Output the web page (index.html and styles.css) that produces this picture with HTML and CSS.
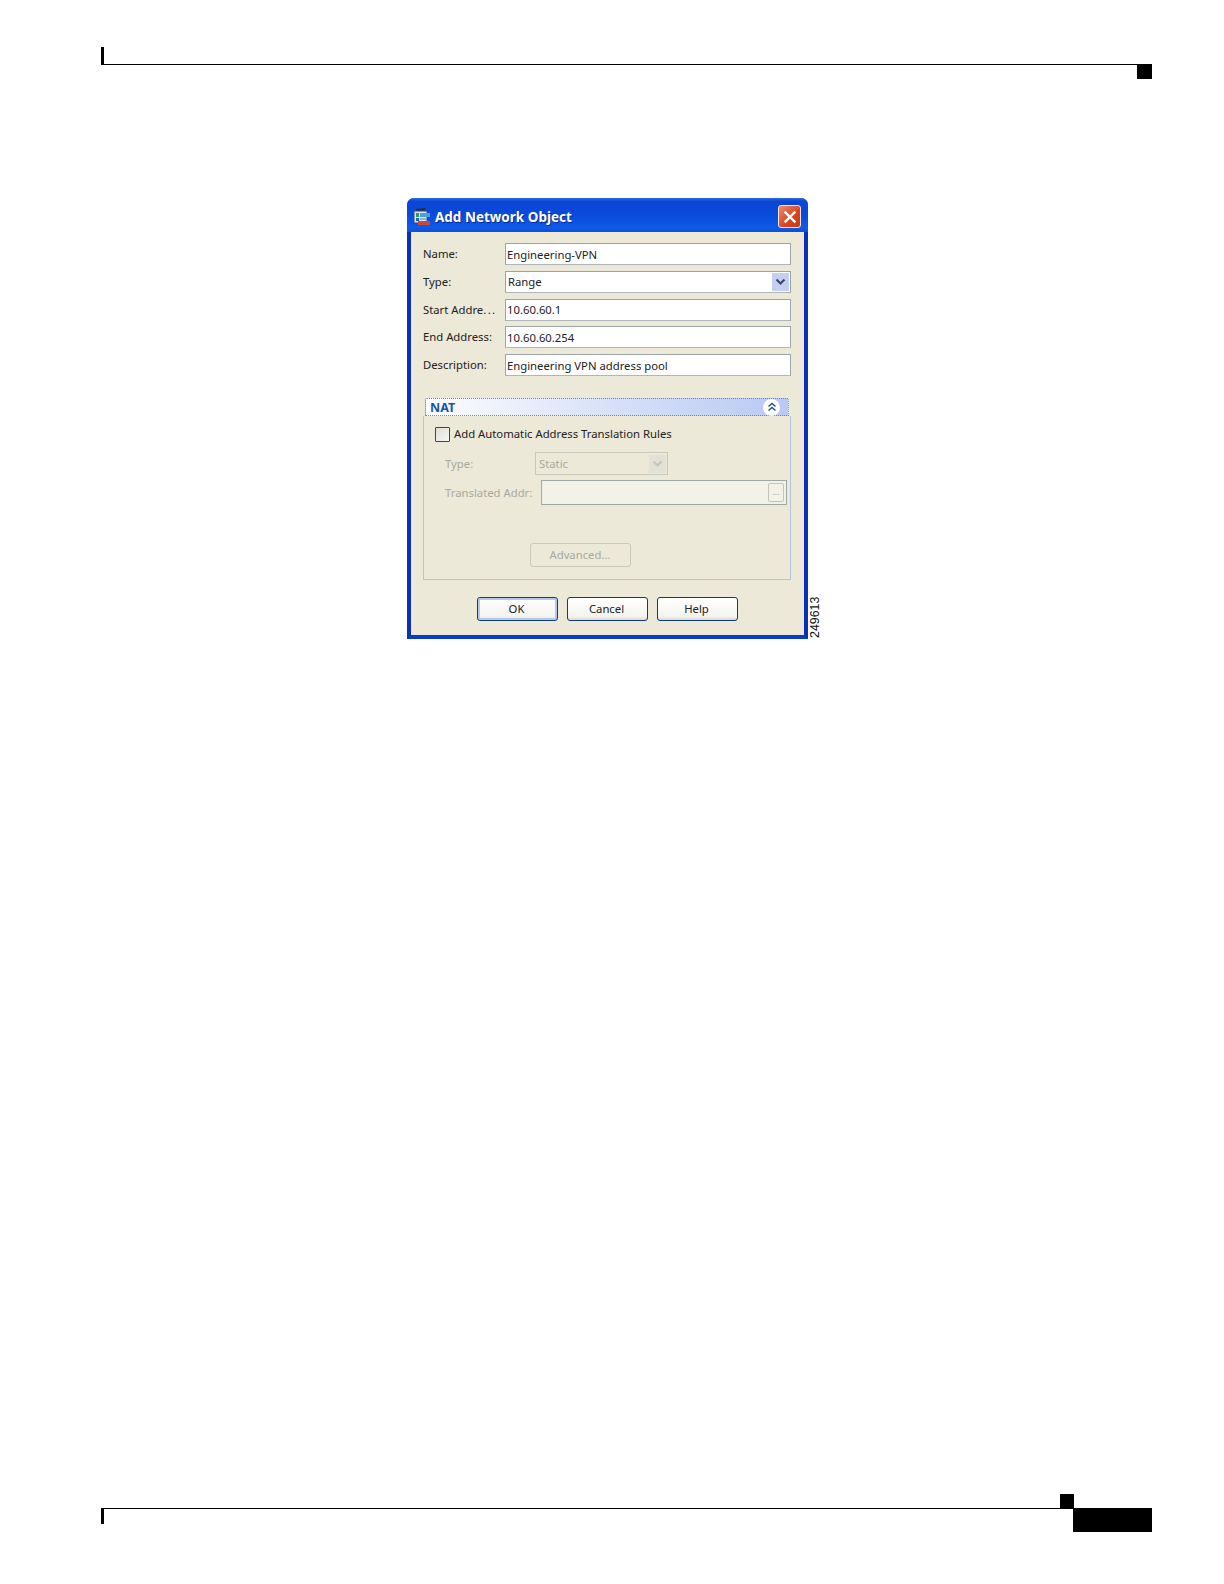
FILE: index.html
```html
<!DOCTYPE html>
<html lang="en">
<head>
  <meta charset="UTF-8" />
  <title>Add Network Object</title>
  <link rel="stylesheet" href="styles.css">
</head>
<body>

  <!-- Page header -->
  <div class="page-head">
    <div class="head-rule"></div>
    <div class="head-square"></div>
  </div>

  <!-- Figure: dialog plus rotated figure number -->
  <div class="figure">
    <div class="dialog">
      <div class="titlebar">
        <svg class="app-icon" width="18" height="18" viewBox="0 0 18 18">
          <path d="M3 1 L12 0 L13 4 L3 4 Z" fill="#1f2f4f"/>
          <rect x="1" y="3" width="13" height="12" fill="#dfe8f2" stroke="#2d4a78"/>
          <rect x="3" y="5" width="3" height="4" fill="#2f9a5b"/>
          <rect x="3" y="10" width="3" height="3" fill="#1d5fc4"/>
          <rect x="7" y="5" width="10" height="4" fill="#49a0e8"/>
          <rect x="7" y="10" width="6" height="2" fill="#8fb0d8"/>
          <rect x="5" y="13" width="12" height="4" fill="#c9473d"/>
        </svg>
        <span class="title">Add Network Object</span>
        <div class="close">
          <svg width="14" height="14" viewBox="0 0 14 14"><path d="M2.5 2.5 L11.5 11.5 M11.5 2.5 L2.5 11.5" stroke="#fff" stroke-width="2.4" stroke-linecap="square"/></svg>
        </div>
      </div>

      <div class="body">
        <div class="field-row">
          <label>Name:</label>
          <div class="input">Engineering-VPN</div>
        </div>
        <div class="field-row">
          <label>Type:</label>
          <div class="input select">
            <span>Range</span>
            <div class="arrow"><svg width="11" height="8" viewBox="0 0 11 8"><path d="M1.5 1.5 L5.5 5.5 L9.5 1.5" fill="none" stroke="#3c4a6b" stroke-width="2.2"/></svg></div>
          </div>
        </div>
        <div class="field-row">
          <label>Start Addre<span class="ell">...</span></label>
          <div class="input">10.60.60.1</div>
        </div>
        <div class="field-row">
          <label>End Address:</label>
          <div class="input">10.60.60.254</div>
        </div>
        <div class="field-row">
          <label>Description:</label>
          <div class="input">Engineering VPN address pool</div>
        </div>

        <div class="nat">
          <div class="nat-head">
            <span>NAT</span>
            <div class="collapse">
              <svg width="10" height="10" viewBox="0 0 10 10"><path d="M1.5 4.5 L5 1.5 L8.5 4.5 M1.5 8.5 L5 5.5 L8.5 8.5" fill="none" stroke="#24508f" stroke-width="1.5"/></svg>
            </div>
          </div>
          <div class="nat-body">
            <div class="check-row">
              <div class="checkbox"></div>
              <span>Add Automatic Address Translation Rules</span>
            </div>
            <div class="nat-type">
              <label>Type:</label>
              <div class="off-select">
                <span>Static</span>
                <div class="off-arrow"><svg width="11" height="8" viewBox="0 0 11 8"><path d="M1.5 1.5 L5.5 5.5 L9.5 1.5" fill="none" stroke="#c4c4bb" stroke-width="2"/></svg></div>
              </div>
            </div>
            <div class="nat-addr">
              <label>Translated Addr:</label>
              <div class="off-input"><div class="dots">...</div></div>
            </div>
            <button class="btn advanced">Advanced...</button>
          </div>
        </div>

        <div class="actions">
          <button class="btn primary">OK</button>
          <button class="btn">Cancel</button>
          <button class="btn">Help</button>
        </div>
      </div>
    </div>
    <div class="fig-num"><span>249613</span></div>
  </div>

  <!-- Page footer -->
  <div class="page-foot">
    <div class="foot-square"></div>
    <div class="foot-rule"></div>
    <div class="foot-box"></div>
  </div>

</body>
</html>
```

FILE: styles.css
```css
* {
  box-sizing: border-box;
}

body {
  margin: 0;
  width: 1224px;
  height: 1584px;
  background: white;
  font-family: "Noto Sans", sans-serif;
  font-size: 11.3px;
  color: #222;
  overflow: hidden;
  display: flex;
  flex-direction: column;
}

.page-head {
  margin: 47px 72px 0 101px;
  height: 32px;
  position: relative;
}

.head-rule {
  height: 18px;
  border-left: 3px solid black;
  border-bottom: 1px solid black;
}

.head-square {
  position: absolute;
  right: 0;
  top: 17px;
  width: 15px;
  height: 15px;
  background: black;
}

.figure {
  margin: 119px 0 0 407px;
  display: flex;
  align-items: flex-end;
}

.dialog {
  width: 401px;
  height: 441px;
  display: flex;
  flex-direction: column;
  border-style: solid;
  border-width: 0 4px 4px;
  border-color: #0f50dc #0a30b8 #0a3cc8;
  border-radius: 7px 7px 0 0;
}

.titlebar {
  height: 34px;
  flex: none;
  display: flex;
  align-items: center;
  margin: 0 -4px;
  padding: 3px 7px 0 6px;
  color: white;
  background: linear-gradient(#2a6ae0, #0a45d5 10%, #0a4ada 50%, #0f5ae8 88%, #0a50d8);
  border-radius: 7px 7px 0 0;
}

.app-icon {
  flex: none;
}

.title {
  margin-left: 4px;
  flex: 1;
  font-size: 13.5px;
  font-weight: bold;
  text-shadow: 1px 1px 0 #0a2a90;
}

.close {
  width: 23px;
  height: 23px;
  border: 1px solid #f0e8e0;
  border-radius: 3px;
  background: linear-gradient(135deg, #ec8a70, #d9431f 60%, #c63a18);
  display: flex;
  align-items: center;
  justify-content: center;
}

.body {
  flex: 1;
  background: #ece9d8;
  padding: 11px 13px 0 11px;
  display: flex;
  flex-direction: column;
}

.field-row {
  display: flex;
  align-items: center;
  height: 22px;
  margin-bottom: 5.8px;
}

.field-row label {
  width: 83px;
  flex: none;
  padding: 0 0 1px 1px;
  white-space: nowrap;
}

.ell {
  letter-spacing: 1.4px;
}

.input {
  flex: 1;
  height: 22px;
  background: white;
  border: 1px solid #9aa5ab;
  border-bottom-color: #aeb6ba;
  display: flex;
  align-items: center;
  padding-left: 1px;
  white-space: nowrap;
}

.select {
  justify-content: space-between;
  padding-right: 1px;
  padding-left: 2px;
}

.arrow {
  width: 17px;
  height: 18px;
  background: #c4d0f2;
  display: flex;
  align-items: center;
  justify-content: center;
}

.nat {
  margin: 16.5px 0 0 1px;
  display: flex;
  flex-direction: column;
  height: 182px;
}

.nat-head {
  margin: 0 2px;
  height: 18px;
  flex: none;
  border: 1px dotted #6f86b8;
  border-radius: 2px 2px 0 0;
  background: linear-gradient(90deg, #fdfdff, #d8e1f8 50%, #b9c9f2);
  display: flex;
  align-items: center;
  justify-content: space-between;
  padding: 0 8px 0 4px;
}

.nat-head span {
  font-weight: bold;
  color: #1a55a8;
  font-size: 12.5px;
}

.collapse {
  width: 17px;
  height: 17px;
  border-radius: 50%;
  background: white;
  display: flex;
  align-items: center;
  justify-content: center;
}

.nat-body {
  flex: 1;
  border: 1px solid #b4c4dc;
  border-top: none;
  display: flex;
  flex-direction: column;
  padding: 10px 3px 0 11px;
}

.check-row {
  display: flex;
  align-items: center;
  gap: 4px;
  height: 17px;
  white-space: nowrap;
}

.check-row span {
  padding-bottom: 2px;
}

.checkbox {
  width: 15px;
  height: 15px;
  border: 1px solid #2a4a78;
  border-radius: 1px;
  background: linear-gradient(135deg, #e0dfd6, #f6f6f2);
}

.nat-type {
  display: flex;
  align-items: center;
  margin-top: 9px;
  padding-left: 10px;
  color: #a9a99e;
}

.nat-type label {
  width: 90px;
  flex: none;
}

.off-select {
  width: 133px;
  height: 23px;
  border: 1px solid #c9c8ba;
  display: flex;
  align-items: center;
  justify-content: space-between;
  padding: 0 1px 0 3px;
}

.off-arrow {
  width: 17px;
  height: 18px;
  background: #e2e1d6;
  display: flex;
  align-items: center;
  justify-content: center;
}

.nat-addr {
  display: flex;
  align-items: center;
  margin-top: 5px;
  padding-left: 10px;
  color: #a9a99e;
}

.nat-addr label {
  width: 96px;
  flex: none;
  white-space: nowrap;
}

.off-input {
  flex: 1;
  height: 25px;
  background: #f3f2e8;
  border: 1px solid #9ea8a6;
  display: flex;
  align-items: center;
  justify-content: flex-end;
  padding-right: 2px;
}

.dots {
  width: 16px;
  height: 19px;
  border: 1px solid #c4c4ba;
  border-radius: 2px;
  font-size: 9px;
  text-align: center;
  line-height: 15px;
}

.btn {
  width: 81px;
  height: 24px;
  border: 1px solid #0f3c74;
  border-radius: 3px;
  background: linear-gradient(#fff, #f4f3ee 85%, #dcd8cc);
  font-family: inherit;
  font-size: 11.3px;
  color: #222;
  padding: 0 1px 1px 0;
}

.btn.primary {
  box-shadow: inset 0 0 0 2px #b4c8ea;
}

.btn.advanced {
  width: 101px;
  margin: 38px 0 0 95px;
  border-color: #c9c8ba;
  background: #ece9d8;
  color: #a9a99e;
}

.actions {
  display: flex;
  justify-content: center;
  gap: 9px;
  margin-top: 17px;
  padding-left: 1px;
}

.fig-num {
  width: 13px;
  height: 44px;
  margin: 0 0 1px 1px;
  font-family: "Liberation Sans", sans-serif;
  font-size: 12.4px;
  color: #111;
  writing-mode: vertical-rl;
  transform: rotate(180deg);
  line-height: 13px;
}

.page-foot {
  margin: 855px 72px 0 101px;
  position: relative;
  height: 38px;
}

.foot-rule {
  position: absolute;
  left: 0;
  right: 0;
  top: 14px;
  height: 16px;
  border-left: 3px solid black;
  border-top: 1px solid black;
}

.foot-square {
  position: absolute;
  right: 78px;
  top: 0;
  width: 14px;
  height: 14px;
  background: black;
}

.foot-box {
  position: absolute;
  right: 0;
  top: 14px;
  width: 79px;
  height: 24px;
  background: black;
}
```
